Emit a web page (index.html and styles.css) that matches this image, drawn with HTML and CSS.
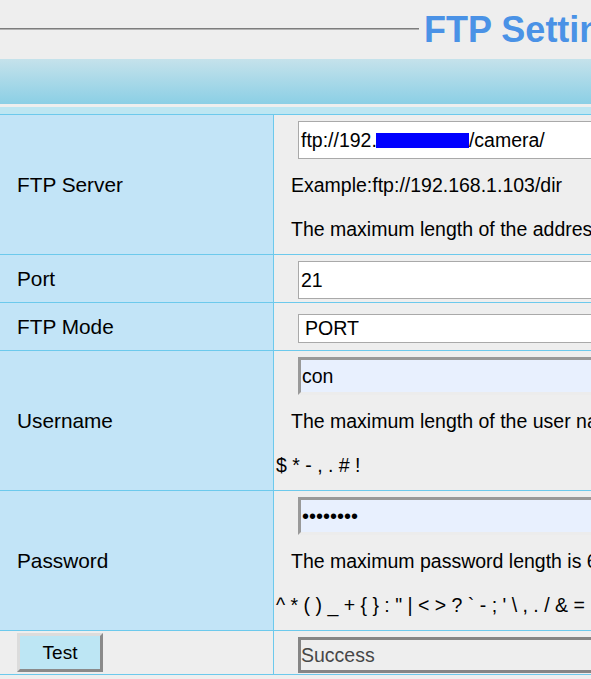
FILE: index.html
```html
<!DOCTYPE html>
<html>
<head>
<meta charset="utf-8">
<title>FTP Settings</title>
<link rel="stylesheet" href="styles.css">
</head>
<body>
<div class="page">
  <div class="head">
    <div class="rule"></div>
    <h1 class="title">FTP Settings</h1>
  </div>
  <div class="bar"></div>
  <div class="strip"></div>
  <div class="grid">
    <div class="lab">FTP Server</div>
    <div class="val">
      <div class="field plain">ftp://192.<span class="redact"></span>/camera/</div>
      <p class="help">Example:ftp://192.168.1.103/dir</p>
      <p class="help">The maximum length of the address is 128 characters</p>
    </div>

    <div class="lab">Port</div>
    <div class="val">
      <div class="field plain">21</div>
    </div>

    <div class="lab">FTP Mode</div>
    <div class="val val-select">
      <div class="field select">PORT</div>
    </div>

    <div class="lab">Username</div>
    <div class="val">
      <div class="field filled">con</div>
      <p class="help">The maximum length of the user name is 20, including numbers, letters and symbols _ - @<br>$ * - , . # !</p>
    </div>

    <div class="lab">Password</div>
    <div class="val">
      <div class="field filled dots">&#8226;&#8226;&#8226;&#8226;&#8226;&#8226;&#8226;&#8226;</div>
      <p class="help">The maximum password length is 63, including numbers, letters and symbols ~ ! @ # % <br>^ * ( ) _ + { } : " | &lt; &gt; ? ` - ; ' \ , . / &amp; = [ ]</p>
    </div>

    <div class="lab lab-btn"><button class="btn" type="button">Test</button></div>
    <div class="val">
      <div class="field result">Success</div>
    </div>
  </div>
</div>
</body>
</html>
```

FILE: styles.css
```css
html, body {
  margin: 0;
  padding: 0;
  overflow: hidden;
}

body {
  width: 591px;
  height: 679px;
  background: #eeeeee;
  font-family: "Liberation Sans", Arial, sans-serif;
  color: #000;
}

.page {
  width: 1000px;
}

.head {
  display: flex;
  align-items: flex-start;
  height: 59px;
  box-sizing: border-box;
  padding-top: 9px;
}

.rule {
  flex: 0 0 419px;
  margin-top: 19px;
  height: 0;
  border-top: 1px solid #7d7d7d;
  border-bottom: 1px solid #b2b2b2;
}

.title {
  margin: 0 0 0 5px;
  font-size: 36px;
  line-height: 41px;
  font-weight: bold;
  color: #4a92e6;
  white-space: nowrap;
}

.bar {
  height: 45px;
  background: linear-gradient(#c5e2eb, #8bcfe5);
}

.strip {
  height: 7px;
  margin-top: 3px;
  background: #bde6f2;
}

.grid {
  display: grid;
  grid-template-columns: 274px 726px;
  grid-template-rows: 140px 48px 48px 140px 140px 44px;
  border-top: 1px solid #6cc9ec;
}

.lab {
  box-sizing: border-box;
  display: flex;
  align-items: center;
  padding-left: 17px;
  background: #c2e4f7;
  border-right: 1px solid #6cc9ec;
  border-bottom: 1px solid #6cc9ec;
  font-size: 20.8px;
}

.lab-btn {
  align-items: flex-start;
  padding-top: 2px;
  background: #eeeeee;
}

.val {
  box-sizing: border-box;
  padding-top: 6px;
  border-bottom: 1px solid #6cc9ec;
}

.val-select {
  padding-top: 11px;
}

.field {
  box-sizing: border-box;
  width: 700px;
  height: 38px;
  margin-left: 24px;
  display: flex;
  align-items: center;
  font-size: 19.5px;
  white-space: nowrap;
}

.plain {
  background: #ffffff;
  border: 1px solid #a9a9a9;
  padding-left: 2px;
}

.select {
  height: 29px;
  background: #ffffff;
  border: 1px solid #a9a9a9;
  padding-left: 6px;
  font-size: 19.6px;
}

.filled {
  background: #e8f0fe;
  border-top: 3px solid #999999;
  border-left: 3px solid #999999;
  border-bottom: 3px solid #ececec;
  border-right: 3px solid #ececec;
  padding-left: 1px;
}

.dots {
  font-size: 20px;
}

.result {
  height: 36px;
  border: 3px solid #858585;
  padding-left: 0;
  color: #474747;
  font-size: 19.5px;
}

.redact {
  display: inline-block;
  width: 93px;
  height: 15px;
  margin-left: -1px;
  vertical-align: -2px;
  background: #0000ff;
}

.help {
  margin: 4px 0 0;
  padding-left: 2px;
  text-indent: 15px;
  font-size: 19.5px;
  line-height: 44px;
  white-space: nowrap;
}

.help + .help {
  margin-top: 0;
}

.btn {
  box-sizing: border-box;
  width: 86px;
  height: 39px;
  margin: 0;
  padding: 0;
  background: #bde6f4;
  border-style: solid;
  border-width: 3px;
  border-color: #dcdcdc #8a8a8a #8a8a8a #dcdcdc;
  font-family: "Liberation Sans", Arial, sans-serif;
  font-size: 19px;
  color: #000;
}
```
